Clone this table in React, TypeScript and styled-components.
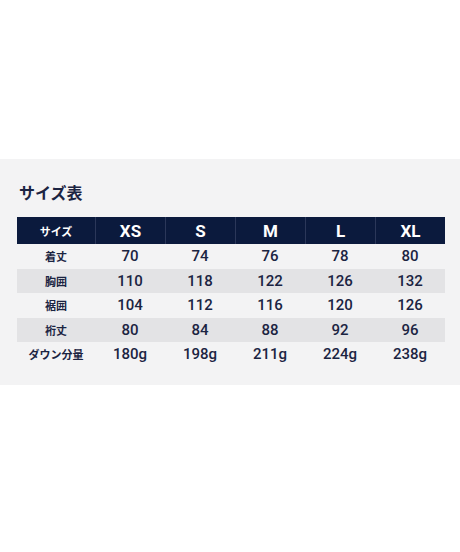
import React from "react";
import styled, { createGlobalStyle } from "styled-components";

const Global = createGlobalStyle`
  html, body { margin: 0; padding: 0; background: #ffffff; }
  body { font-family: Roboto, "Noto Sans CJK JP", sans-serif; }
`;

const Page = styled.div`
  width: 460px;
  height: 552px;
  padding-top: 159px;
  box-sizing: border-box;
`;

const Panel = styled.section`
  background: #f3f3f4;
  height: 226px;
  box-sizing: border-box;
  padding: 23px 15px 0 17px;
`;

const Title = styled.h2`
  margin: 0 0 15px 2px;
  font-family: "Noto Sans CJK JP", sans-serif;
  font-size: 16px;
  line-height: 20px;
  font-weight: 700;
  color: #1b2442;
`;

const Table = styled.div`
  display: grid;
  grid-template-columns: 78px repeat(5, 70px);
`;

const HeadCell = styled.div<{ $first?: boolean }>`
  height: 27px;
  background: #0b1a3d;
  color: #ffffff;
  display: flex;
  align-items: center;
  justify-content: center;
  border-left: ${(p) => (p.$first ? "none" : "1px solid #2b3759")};
  font-family: ${(p) =>
    p.$first ? '"Noto Sans CJK JP", sans-serif' : "Roboto, sans-serif"};
  font-size: ${(p) => (p.$first ? "11px" : "17px")};
  font-weight: 700;
`;

const Cell = styled.div<{ $shade: boolean; $label?: boolean }>`
  height: 24.5px;
  background: ${(p) => (p.$shade ? "#e3e3e5" : "transparent")};
  color: #1b2442;
  display: flex;
  align-items: center;
  justify-content: center;
  font-family: ${(p) =>
    p.$label ? '"Noto Sans CJK JP", sans-serif' : "Roboto, sans-serif"};
  font-size: ${(p) => (p.$label ? "11px" : "15px")};
  font-weight: ${(p) => (p.$label ? 700 : 500)};
`;

const sizes = ["XS", "S", "M", "L", "XL"];
const rows: [string, string[]][] = [
  ["着丈", ["70", "74", "76", "78", "80"]],
  ["胸囲", ["110", "118", "122", "126", "132"]],
  ["裾囲", ["104", "112", "116", "120", "126"]],
  ["裄丈", ["80", "84", "88", "92", "96"]],
  ["ダウン分量", ["180g", "198g", "211g", "224g", "238g"]],
];

export default function App() {
  return (
    <>
      <Global />
      <Page>
        <Panel>
          <Title>サイズ表</Title>
          <Table>
            <HeadCell $first>サイズ</HeadCell>
            {sizes.map((s) => (
              <HeadCell key={s}>{s}</HeadCell>
            ))}
            {rows.map(([label, vals], i) => (
              <React.Fragment key={label}>
                <Cell $shade={i % 2 === 1} $label>
                  {label}
                </Cell>
                {vals.map((v, j) => (
                  <Cell key={j} $shade={i % 2 === 1}>
                    {v}
                  </Cell>
                ))}
              </React.Fragment>
            ))}
          </Table>
        </Panel>
      </Page>
    </>
  );
}
